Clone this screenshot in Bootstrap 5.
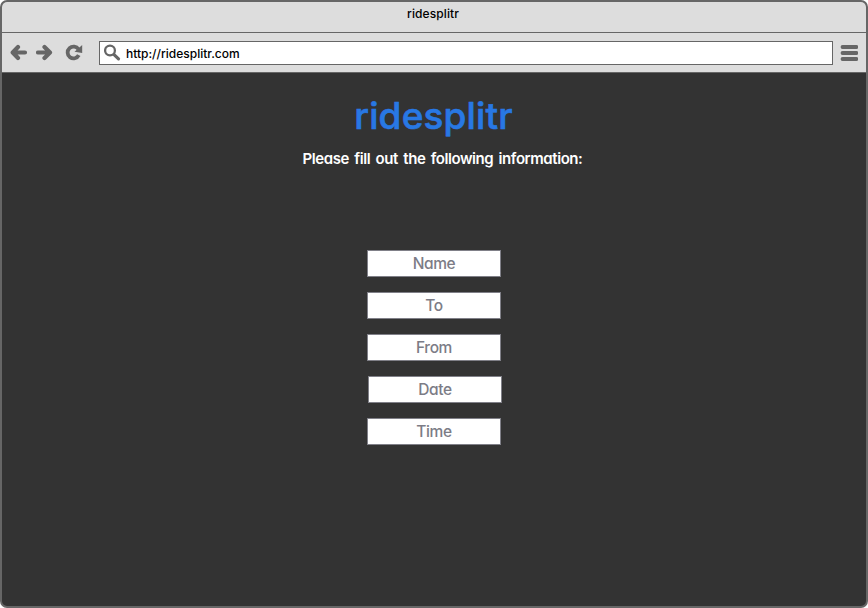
<!DOCTYPE html>
<html lang="en">
<head>
<meta charset="utf-8">
<meta name="viewport" content="width=device-width, initial-scale=1">
<title>ridesplitr</title>
<link href="https://cdn.jsdelivr.net/npm/bootstrap@5.3.0/dist/css/bootstrap.min.css" rel="stylesheet">
<style>
  body { font-family: Inter, "Open Sans", sans-serif; font-feature-settings: "cv11" 1; background: #fff; }
  .window { height: 608px; border: 2px solid #666; border-radius: 7px; background: #333; }
  .titlebar { height: 31px; background: #ddd; border-bottom: 1px solid #666; font-size: 12px; line-height: 15px; padding: 4px 2px 0 0; font-weight: 500; color: #000; letter-spacing: .1px; }
  .toolbar { height: 40px; background: #ddd; border-bottom: 1px solid #666; padding: 0 8px 0 8px; }
  .toolbar svg { display: block; flex: none; }
  .address { height: 24px; background: #fff; border: 1px solid #666; margin: 0 7px 0 15px; padding-left: 4px; font-size: 12px; font-weight: 500; color: #000; letter-spacing: 0; }
  .address span { line-height: 16px; padding-top: 2px; }
  .brand { font-size: 37px; line-height: 44px; font-weight: 500; color: #2878e4; margin: 21px 1px 0 0; letter-spacing: .15px; -webkit-text-stroke: .6px #2878e4; }
  .prompt { font-size: 15px; line-height: 20px; font-weight: 600; margin: 11px 0 81px 17px; letter-spacing: -.43px; word-spacing: 2px; }
  .fields { gap: 15px; }
  .field { width: 134px; height: 27px; line-height: 25px; border: 1px solid #808088; background: #fff; color: #7c7c86; font-size: 15.5px; font-weight: 500; letter-spacing: -.4px; }
  .field-date { margin-left: 1px; margin-right: -1px; }
</style>
<script src="https://cdn.jsdelivr.net/npm/bootstrap@5.3.0/dist/js/bootstrap.bundle.min.js"></script>
</head>
<body class="overflow-hidden">
<div class="window d-flex flex-column overflow-hidden">
  <header class="titlebar text-center flex-shrink-0"><span>ridesplitr</span></header>
  <nav class="toolbar d-flex align-items-center flex-shrink-0">
    <svg width="18" height="18" viewBox="0 0 18 18" fill="none" stroke="#666" stroke-width="4.200" stroke-linecap="round" stroke-linejoin="round"><path d="M8 3 2.700 8.500 8 14M4 8.500h11" /></svg>
    <svg class="ms-2" width="18" height="18" viewBox="0 0 18 18" fill="none" stroke="#666" stroke-width="4.200" stroke-linecap="round" stroke-linejoin="round"><path d="M8.500 3 14 8.500 8.500 14M2 8.500h11" /></svg>
    <svg class="ms-2" width="22" height="18" viewBox="-4 0 22 18"><path d="M12.800 11.200A5.900 5.900 0 1 1 12.500 5.300" fill="none" stroke="#666" stroke-width="3.800"/><path d="M16.200 1V9L8.500 7.700Z" fill="#666"/></svg>
    <div class="address d-flex align-items-center flex-grow-1">
      <svg class="me-1" width="18" height="18" viewBox="0 0 18 18" fill="none" stroke="#666"><circle cx="6" cy="6.500" r="4.900" stroke-width="2.300"/><path d="m10.300 10.800 4.200 4" stroke-width="3.200" stroke-linecap="round"/></svg>
      <span>http://ridesplitr.com</span>
    </div>
    <svg width="18" height="18" viewBox="0 0 18 18" stroke="#666" stroke-width="3.800" stroke-linecap="round"><path d="M2.500 3h14M2.500 9h14M2.500 15h14"/></svg>
  </nav>
  <main class="d-flex flex-column align-items-center text-center">
    <h1 class="brand">ridesplitr</h1>
    <p class="prompt text-white text-nowrap">Please fill out the following information:</p>
    <div class="fields d-flex flex-column">
      <div class="field">Name</div>
      <div class="field">To</div>
      <div class="field">From</div>
      <div class="field field-date">Date</div>
      <div class="field">Time</div>
    </div>
  </main>
</div>
</body>
</html>
